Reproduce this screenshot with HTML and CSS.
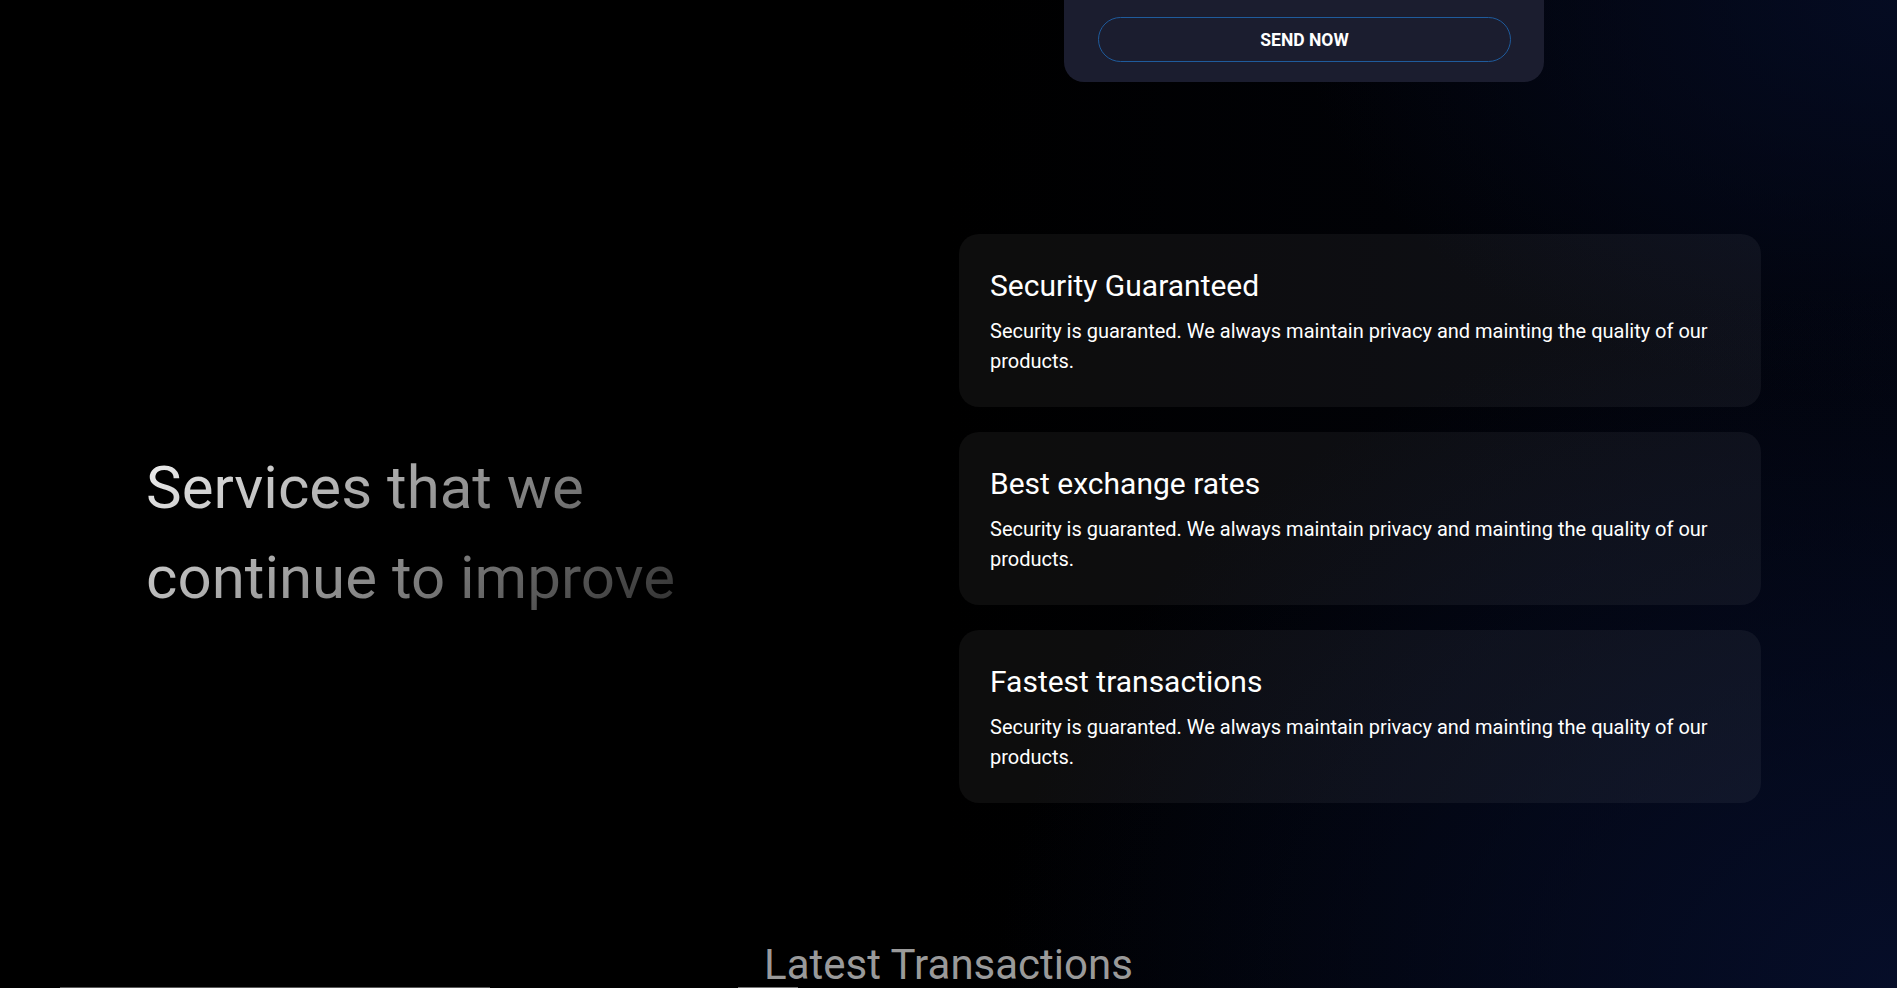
FILE: index.html
```html
<!DOCTYPE html>
<html lang="en">
<head>
<meta charset="utf-8">
<title>Services</title>
<link rel="stylesheet" href="styles.css">
</head>
<body>
<div class="page">
  <section class="send">
    <div class="send-card">
      <button class="send-btn" type="button">SEND NOW</button>
    </div>
  </section>

  <section class="services">
    <div class="services-intro">
      <h2 class="services-title">Services that we<br>continue to improve</h2>
    </div>
    <div class="service-list">
      <div class="service-card">
        <h3 class="service-name">Security Guaranteed</h3>
        <p class="service-text">Security is guaranted. We always maintain privacy and mainting the quality of our products.</p>
      </div>
      <div class="service-card">
        <h3 class="service-name">Best exchange rates</h3>
        <p class="service-text">Security is guaranted. We always maintain privacy and mainting the quality of our products.</p>
      </div>
      <div class="service-card">
        <h3 class="service-name">Fastest transactions</h3>
        <p class="service-text">Security is guaranted. We always maintain privacy and mainting the quality of our products.</p>
      </div>
    </div>
  </section>

  <section class="latest">
    <h2 class="latest-title">Latest Transactions</h2>
    <div class="latest-edges">
      <span class="edge edge-a"></span>
      <span class="edge edge-b"></span>
    </div>
  </section>
</div>
</body>
</html>
```

FILE: styles.css
```css
html, body {
  margin: 0;
  padding: 0;
  height: 100%;
  overflow: hidden;
}

body {
  font-family: Roboto, "Noto Sans", Arial, sans-serif;
  color: #fff;
  background-color: #000;
  background-image:
    radial-gradient(ellipse 900px 700px at 100% 100%, rgba(6, 14, 42, 0.95), rgba(0, 0, 0, 0) 100%),
    radial-gradient(ellipse 600px 400px at 100% 0%, rgba(5, 12, 36, 0.9), rgba(0, 0, 0, 0) 100%),
    linear-gradient(to right, #000 50%, #02040d 100%);
}

.page {
  display: flex;
  flex-direction: column;
}

/* top form card (bottom part visible) */
.send {
  display: flex;
  justify-content: flex-end;
  padding-right: 353px;
}

.send-card {
  width: 480px;
  box-sizing: border-box;
  padding: 17px 33px 20px 34px;
  background: #1b1d2f;
  border-radius: 0 0 20px 20px;
}

.send-btn {
  display: block;
  width: 100%;
  height: 45px;
  border: 1px solid #1f5b9c;
  border-radius: 23px;
  background: #1b1d2f;
  color: #fff;
  font-family: Roboto, Arial, sans-serif;
  font-size: 17.5px;
  font-weight: 700;
  letter-spacing: 0;
  cursor: pointer;
}

/* services */
.services {
  display: grid;
  grid-template-columns: 813px 802px;
  align-items: center;
  padding: 152px 136px 0 146px;
}

.services-intro {
  margin-top: 28px;
}

.services-title {
  display: inline-block;
  margin: 0;
  font-size: 60px;
  font-weight: 400;
  line-height: 90px;
  background: linear-gradient(145deg, #f4f4f4 0%, #2b2b2b 100%);
  -webkit-background-clip: text;
  background-clip: text;
  color: transparent;
}

.service-list {
  display: flex;
  flex-direction: column;
  gap: 25px;
}

.service-card {
  padding: 34px 31px 31px 31px;
  border-radius: 20px;
  background: rgba(255, 255, 255, 0.05);
}

.service-name {
  margin: 0 0 12px;
  font-size: 30px;
  font-weight: 400;
  line-height: 36px;
  color: #fff;
}

.service-text {
  margin: 0;
  font-size: 20px;
  line-height: 30px;
  color: #fff;
}

/* latest transactions */
.latest {
  display: flex;
  flex-direction: column;
  align-items: center;
  padding-top: 140px;
}

.latest-title {
  margin: 0;
  font-size: 42px;
  font-weight: 400;
  line-height: 44px;
  color: #9a9a9a;
}

.latest-edges {
  align-self: stretch;
  display: flex;
  padding-left: 60px;
  gap: 248px;
}

.edge {
  display: block;
  height: 1px;
}

.edge-a {
  width: 430px;
  background: #5a5a5a;
}

.edge-b {
  width: 60px;
  background: #777;
}
```
